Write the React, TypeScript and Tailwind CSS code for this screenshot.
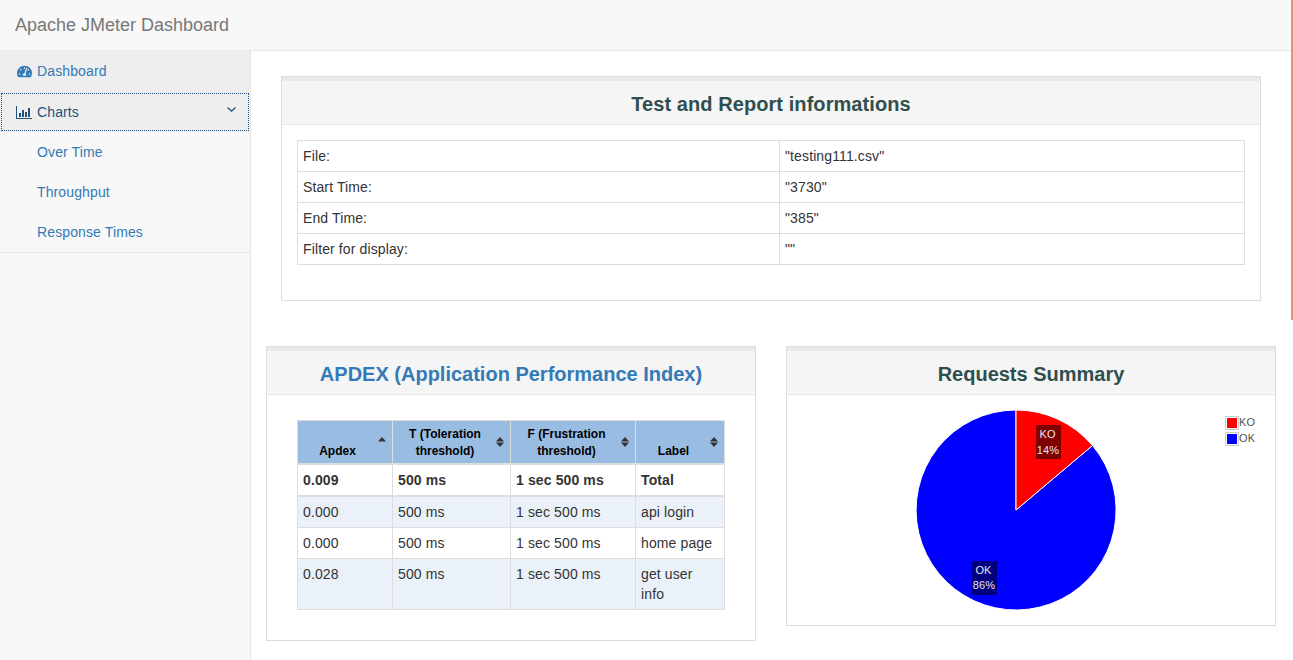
import React from 'react';
import { FaTachometerAlt } from 'react-icons/fa';

const infoRows = [
  ['File:', '"testing111.csv"'],
  ['Start Time:', '"3730"'],
  ['End Time:', '"385"'],
  ['Filter for display:', '""'],
];

const apdexRows = [
  ['0.000', '500 ms', '1 sec 500 ms', 'api login'],
  ['0.000', '500 ms', '1 sec 500 ms', 'home page'],
  ['0.028', '500 ms', '1 sec 500 ms', 'get user info'],
];

const SortIcon = ({ asc }: { asc?: boolean }) => (
  <svg viewBox="0 0 8 10" className="absolute right-[6px] top-1/2 h-[10px] w-[8px] -translate-y-1/2">
    <path d="M0 4.5 L4 0 L8 4.5 Z" fill="#333" />
    {!asc && <path d="M0 5.5 L4 10 L8 5.5 Z" fill="#333" />}
  </svg>
);

const ChartIcon = () => (
  <svg viewBox="0 0 16 13" className="h-[13px] w-[16px]">
    <path d="M0 0 H1 V12 H16 V13 H0 Z" fill="#23527c" />
    <path d="M3 7 H5 V11 H3 Z M6 4 H8 V11 H6 Z M9 6 H11 V11 H9 Z M12 2 H14 V11 H12 Z" fill="#23527c" />
  </svg>
);

const Panel = ({ title, titleClass, className, children }: { title: string; titleClass: string; className: string; children: React.ReactNode }) => (
  <div className={`border border-[#ddd] bg-white ${className}`}>
    <div className="flex h-[48px] items-center justify-center border-t-[4px] border-b border-t-[#e7e9eb] border-b-[#e7e7e7] bg-[#f5f5f5] pt-[2px]">
      <h3 className={`text-[20px] font-bold leading-[22px] ${titleClass}`}>{title}</h3>
    </div>
    {children}
  </div>
);

const PieChart = () => (
  <svg viewBox="0 0 488 230" className="block h-[230px] w-[488px]" fontFamily="'Liberation Sans', sans-serif" fontSize="11">
    <path d="M229 115 L229 15 A100 100 0 1 0 305.5 50.5 Z" fill="#0000ff" stroke="#fff" strokeWidth="1" />
    <path d="M229 115 L229 15 A100 100 0 0 1 305.5 50.5 Z" fill="#ff0000" stroke="#fff" strokeWidth="1" />
    <rect x="249" y="30" width="25" height="34" fill="#7f0000" />
    <text x="260.5" y="43" textAnchor="middle" fill="#e8e8e8">KO</text>
    <text x="261" y="59" textAnchor="middle" fill="#e8e8e8">14%</text>
    <rect x="185" y="166" width="25" height="34" fill="#00007f" />
    <text x="196.5" y="179" textAnchor="middle" fill="#e8e8e8">OK</text>
    <text x="197" y="194" textAnchor="middle" fill="#e8e8e8">86%</text>
    <rect x="438.5" y="21.5" width="13" height="13" fill="#fff" stroke="#ccc" />
    <rect x="440" y="23" width="10" height="10" fill="#ff0000" />
    <text x="452" y="30.5" fill="#545454">KO</text>
    <rect x="438.5" y="37.5" width="13" height="13" fill="#fff" stroke="#ccc" />
    <rect x="440" y="39" width="10" height="10" fill="#0000ff" />
    <text x="452" y="46.5" fill="#545454">OK</text>
  </svg>
);

const App = () => {
  return (
    <div className="relative flex h-screen flex-col overflow-hidden bg-white font-['Liberation_Sans',sans-serif] text-[14px] leading-[20px] tracking-[0.12px] text-[#333]">
      {/* Navbar */}
      <nav className="h-[51px] shrink-0 border-b border-[#e7e7e7] bg-[#f8f8f8] p-[15px]">
        <span className="text-[18px] leading-[20px] tracking-normal text-[#777]">Apache JMeter Dashboard</span>
      </nav>

      <div className="flex min-h-0 flex-1">
        {/* Sidebar */}
        <aside className="w-[251px] shrink-0 border-r border-[#e7e7e7] bg-[#f8f8f8]">
          <ul className="border-b border-[#e7e7e7]">
            <li className="flex h-[41px] items-center bg-[#eee] pb-px pl-[17px] text-[#337ab7]">
              <FaTachometerAlt className="mr-[5px] h-[15px] w-[15px]" />
              Dashboard
            </li>
            <li className="flex h-[40px] items-center bg-[#eee] pl-[16px] pr-[14px] text-[#23527c] outline-1 -outline-offset-2 outline-dotted outline-[#23527c]">
              <ChartIcon />
              <span className="ml-[5px]">Charts</span>
              <svg viewBox="0 0 9 5" className="ml-auto h-[5px] w-[9px] -translate-y-[3px]">
                <path d="M0.5 0.5 L4.5 4.2 L8.5 0.5" fill="none" stroke="#23527c" strokeWidth="1.3" />
              </svg>
            </li>
            <li className="flex h-[40px] items-center pl-[37px] text-[#337ab7]">Over Time</li>
            <li className="flex h-[40px] items-center pl-[37px] text-[#337ab7]">Throughput</li>
            <li className="flex h-[40px] items-center pl-[37px] text-[#337ab7]">Response Times</li>
          </ul>
        </aside>

        {/* Main content */}
        <main className="min-w-0 flex-1 pt-[25px]">
          <Panel title="Test and Report informations" titleClass="tracking-[0.07px] text-[#2f4f4f]" className="ml-[30px] h-[225px] w-[980px]">
            <div className="px-[15px] pt-[15px]">
              <table className="w-[948px] table-fixed border-collapse">
                <tbody>
                  {infoRows.map((row) => (
                    <tr key={row[0]}>
                      <td className="w-[482px] border border-[#ddd] p-[5px]">{row[0]}</td>
                      <td className="border border-[#ddd] p-[5px]">{row[1]}</td>
                    </tr>
                  ))}
                </tbody>
              </table>
            </div>
          </Panel>

          <div className="mt-[45px] ml-[15px] flex items-start gap-[30px]">
            <Panel title="APDEX (Application Performance Index)" titleClass="tracking-normal text-[#337ab7]" className="h-[295px] w-[490px]">
              <div className="px-[30px] pt-[25px]">
                <table className="w-[428px] table-fixed border-collapse">
                  <thead>
                    <tr className="bg-[#99bce3] text-[12px] leading-[17px] font-bold tracking-normal text-black">
                      <th className="relative w-[95px] border border-[#ddd] pl-[5px] pr-[20px] pt-[5px] pb-[3px] align-bottom">
                        Apdex
                        <SortIcon asc />
                      </th>
                      <th className="relative w-[118px] border border-[#ddd] pl-[5px] pr-[18px] pt-[5px] pb-[3px] align-bottom">
                        T (Toleration threshold)
                        <SortIcon />
                      </th>
                      <th className="relative w-[125px] border border-[#ddd] pl-[5px] pr-[18px] pt-[5px] pb-[3px] align-bottom">
                        F (Frustration threshold)
                        <SortIcon />
                      </th>
                      <th className="relative border border-[#ddd] pl-[5px] pr-[18px] pt-[5px] pb-[3px] align-bottom">
                        Label
                        <SortIcon />
                      </th>
                    </tr>
                  </thead>
                  <tbody>
                    <tr className="font-bold">
                      <td className="border border-[#ddd] border-t-2 p-[5px]">0.009</td>
                      <td className="border border-[#ddd] border-t-2 p-[5px]">500 ms</td>
                      <td className="border border-[#ddd] border-t-2 p-[5px]">1 sec 500 ms</td>
                      <td className="border border-[#ddd] border-t-2 p-[5px]">Total</td>
                    </tr>
                    {apdexRows.map((row, index) => (
                      <tr key={index} className={index % 2 === 0 ? 'bg-[#eaf1f9]' : 'bg-white'}>
                        {row.map((cell, cellIndex) => (
                          <td
                            key={cellIndex}
                            className={`border border-[#ddd] p-[5px] align-top ${cellIndex === 3 ? 'pr-[8px]' : ''} ${index === 0 ? 'border-t-2' : ''}`}
                          >
                            {cell}
                          </td>
                        ))}
                      </tr>
                    ))}
                  </tbody>
                </table>
              </div>
            </Panel>

            <Panel title="Requests Summary" titleClass="tracking-normal text-[#2f4f4f]" className="h-[280px] w-[490px]">
              <PieChart />
            </Panel>
          </div>
        </main>
      </div>

      {/* Scroll indicator */}
      <div className="absolute right-0 top-0 h-[320px] w-[2px] bg-[#f0906a]" />
    </div>
  );
};

export default App;
